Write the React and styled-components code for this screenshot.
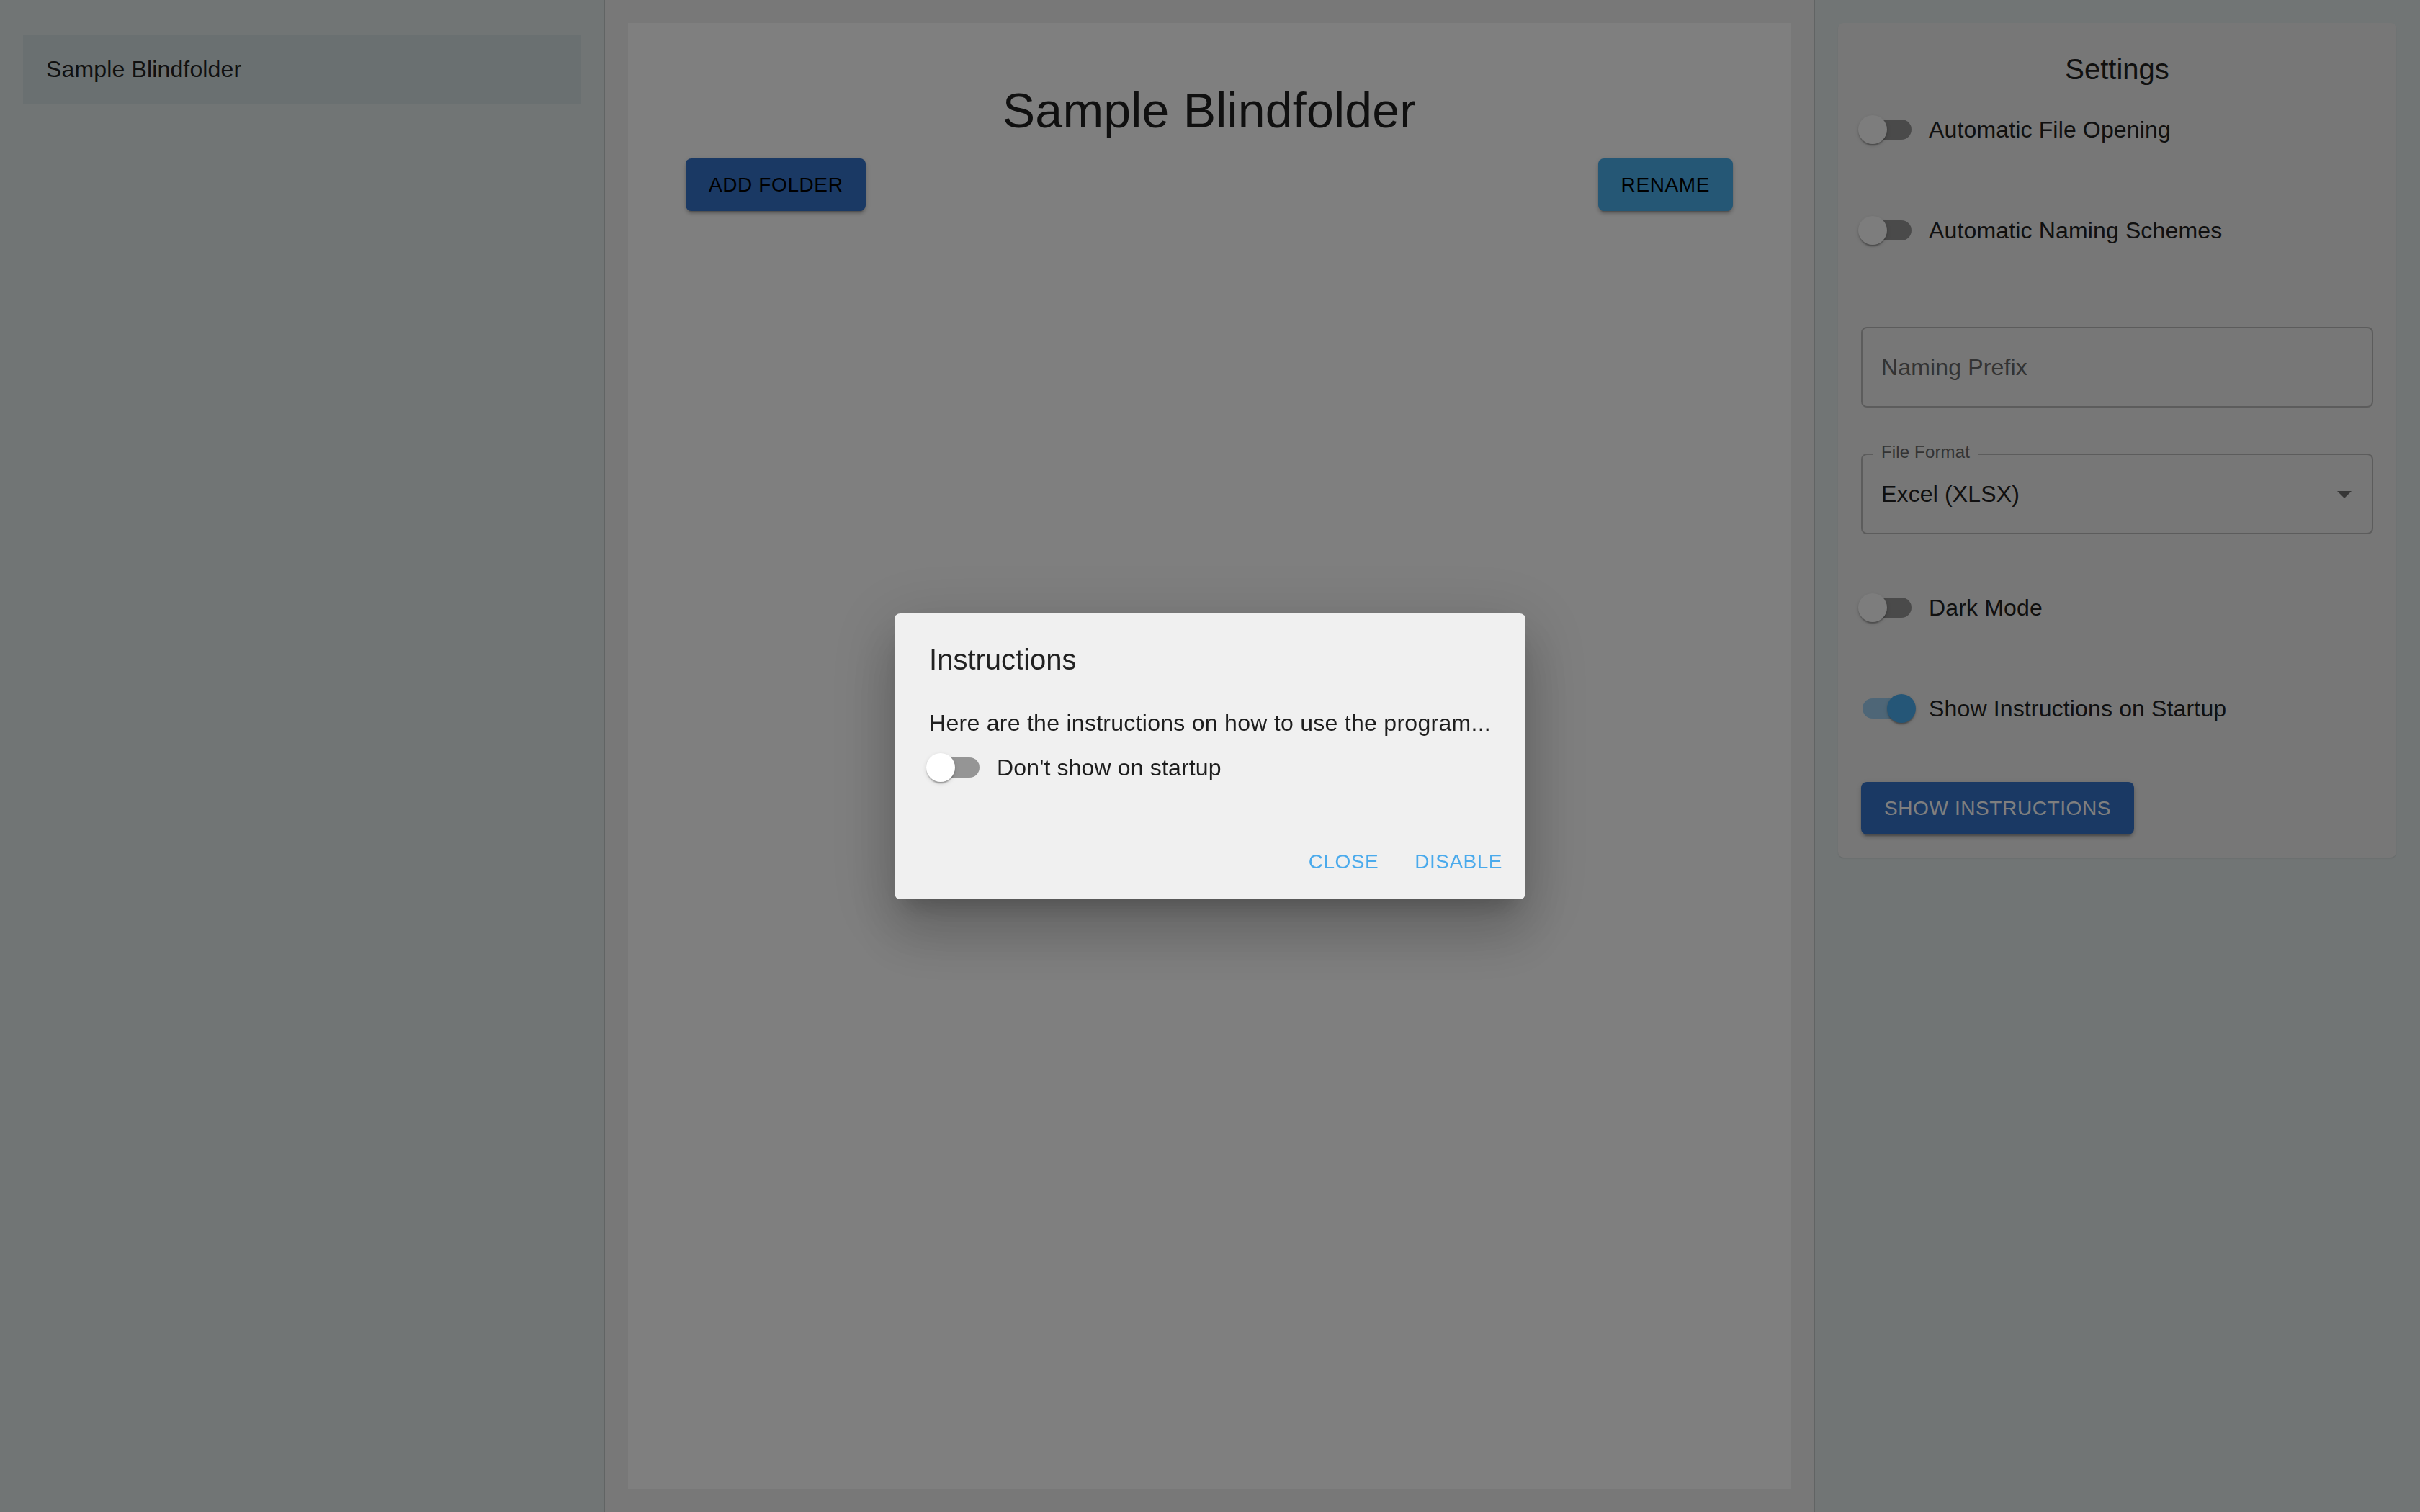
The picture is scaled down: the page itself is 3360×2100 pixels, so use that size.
import React from "react";
import styled, { createGlobalStyle } from "styled-components";

const GlobalStyle = createGlobalStyle`
  html, body {
    margin: 0;
    padding: 0;
    font-family: "Liberation Sans", Arial, sans-serif;
    color: #212121;
  }
  * {
    box-sizing: border-box;
  }
`;

const Layout = styled.div`
  display: grid;
  grid-template-columns: 840px 1fr 842px;
  height: 100vh;
  overflow: hidden;
`;

const Sidebar = styled.aside`
  background: #e2eaea;
  border-right: 2px solid #c2c9c9;
  padding: 48px 32px;
`;

const SidebarItem = styled.div`
  background: #d4e0e3;
  padding: 24px 32px;
  font-size: 32px;
  line-height: 48px;
  letter-spacing: 0.15px;
  color: #212121;
`;

const Main = styled.main`
  background: #f0f0f0;
  padding: 32px;
`;

const MainPaper = styled.section`
  background: #ffffff;
  height: 100%;
  padding: 80px;
`;

const Title = styled.h1`
  margin: 0 0 26px;
  font-size: 68px;
  line-height: 82px;
  font-weight: 400;
  text-align: center;
  letter-spacing: 0.2px;
  color: #212121;
`;

const ButtonRow = styled.div`
  display: flex;
  justify-content: space-between;
  align-items: center;
`;

const ContainedButton = styled.button`
  border: 0;
  border-radius: 8px;
  padding: 12px 32px;
  font-family: inherit;
  font-size: 28px;
  line-height: 49px;
  font-weight: 500;
  letter-spacing: 0.6px;
  text-transform: uppercase;
  background: ${(p) => p.$bg};
  color: ${(p) => p.$fg};
  box-shadow: 0 6px 2px -4px rgba(0, 0, 0, 0.2), 0 4px 4px 0 rgba(0, 0, 0, 0.14),
    0 2px 10px 0 rgba(0, 0, 0, 0.12);
  align-self: flex-start;
`;

const SettingsPanel = styled.aside`
  background: #e2eaea;
  border-left: 2px solid #c2c9c9;
  padding: 32px 33px 32px 32px;
`;

const SettingsPaper = styled.section`
  background: #efefef;
  border-radius: 8px;
  padding: 32px;
  display: flex;
  flex-direction: column;
  box-shadow: 0 2px 2px -1px rgba(0, 0, 0, 0.1), 0 1px 2px 0 rgba(0, 0, 0, 0.06);
`;

const SettingsTitle = styled.h2`
  margin: 0 0 14px;
  font-size: 40px;
  line-height: 64px;
  font-weight: 400;
  text-align: center;
  color: #212121;
`;

const SettingsStack = styled.div`
  display: flex;
  flex-direction: column;
  gap: 64px;
`;

const SwitchRow = styled.label`
  display: flex;
  align-items: center;
  height: 76px;
  margin-left: -22px;
  font-size: 32px;
  line-height: 48px;
  letter-spacing: 0.15px;
  color: #212121;
`;

const SwitchRoot = styled.span`
  position: relative;
  display: inline-block;
  width: 116px;
  height: 76px;
  flex-shrink: 0;
`;

const SwitchTrack = styled.span`
  position: absolute;
  left: 24px;
  top: 24px;
  width: 68px;
  height: 28px;
  border-radius: 14px;
  background: ${(p) => (p.$checked ? "#4aacee" : "#000")};
  opacity: ${(p) => (p.$checked ? 0.5 : 0.38)};
`;

const SwitchThumb = styled.span`
  position: absolute;
  top: 18px;
  left: ${(p) => (p.$checked ? "58px" : "18px")};
  width: 40px;
  height: 40px;
  border-radius: 50%;
  background: ${(p) => (p.$checked ? "#4aacee" : p.$white ? "#ffffff" : "#fafafa")};
  box-shadow: 0 4px 2px -2px rgba(0, 0, 0, 0.2), 0 2px 2px 0 rgba(0, 0, 0, 0.14),
    0 2px 6px 0 rgba(0, 0, 0, 0.12);
`;

const Switch = ({ checked, white }) => (
  <SwitchRoot>
    <SwitchTrack $checked={checked} />
    <SwitchThumb $checked={checked} $white={white} />
  </SwitchRoot>
);

const OutlinedField = styled.div`
  position: relative;
  display: flex;
  align-items: center;
  height: 112px;
  border: 2px solid #b8b8b8;
  border-radius: 8px;
  padding: 0 26px;
  font-size: 32px;
  line-height: 48px;
  letter-spacing: 0.15px;
  color: ${(p) => (p.$placeholder ? "#666666" : "#212121")};
  margin-top: ${(p) => p.$mt || "0px"};
`;

const FloatingLabel = styled.span`
  position: absolute;
  left: 15px;
  top: -16px;
  padding: 0 11px;
  background: #efefef;
  font-size: 24px;
  line-height: 24px;
  color: #666666;
`;

const SelectValue = styled.span`
  flex: 1;
`;

const DropArrow = styled.svg`
  width: 48px;
  height: 48px;
  margin-right: -12px;
  fill: rgba(0, 0, 0, 0.54);
`;

const Backdrop = styled.div`
  position: fixed;
  inset: 0;
  background: rgba(0, 0, 0, 0.5);
  display: flex;
  align-items: center;
  justify-content: center;
`;

const Dialog = styled.div`
  background: #f0f0f0;
  border-radius: 8px;
  box-shadow: 0 22px 30px -14px rgba(0, 0, 0, 0.2), 0 48px 76px 6px rgba(0, 0, 0, 0.14),
    0 18px 92px 16px rgba(0, 0, 0, 0.12);
`;

const DialogTitle = styled.h2`
  margin: 0;
  padding: 32px 48px;
  font-size: 40px;
  line-height: 64px;
  font-weight: 400;
  color: #212121;
`;

const DialogContent = styled.div`
  padding: 0 48px 40px;
`;

const DialogText = styled.p`
  margin: 0;
  font-size: 32px;
  line-height: 48px;
  letter-spacing: 0.28px;
  color: #1e1e1e;
`;

const DialogSwitchRow = styled(SwitchRow)`
  color: #1e1e1e;
`;

const DialogActions = styled.div`
  display: flex;
  justify-content: flex-end;
  gap: 18px;
  padding: 16px;
`;

const TextButton = styled.button`
  border: 0;
  background: transparent;
  padding: 12px 16px;
  border-radius: 8px;
  font-family: inherit;
  font-size: 28px;
  line-height: 49px;
  font-weight: 500;
  letter-spacing: 0.5px;
  text-transform: uppercase;
  color: #4aaaec;
`;

export default function App() {
  return (
    <>
      <GlobalStyle />
      <Layout>
        <Sidebar>
          <SidebarItem>Sample Blindfolder</SidebarItem>
        </Sidebar>

        <Main>
          <MainPaper>
            <Title>Sample Blindfolder</Title>
            <ButtonRow>
              <ContainedButton $bg="#3472c8" $fg="#000000">
                Add Folder
              </ContainedButton>
              <ContainedButton $bg="#4aaeea" $fg="#000000">
                Rename
              </ContainedButton>
            </ButtonRow>
          </MainPaper>
        </Main>

        <SettingsPanel>
          <SettingsPaper>
            <SettingsTitle>Settings</SettingsTitle>
            <SettingsStack>
              <SwitchRow>
                <Switch />
                Automatic File Opening
              </SwitchRow>
              <SwitchRow>
                <Switch />
                Automatic Naming Schemes
              </SwitchRow>
              <OutlinedField $placeholder $mt="32px">
                Naming Prefix
              </OutlinedField>
              <OutlinedField>
                <FloatingLabel>File Format</FloatingLabel>
                <SelectValue>Excel (XLSX)</SelectValue>
                <DropArrow viewBox="0 0 24 24">
                  <path d="M7 10l5 5 5-5z" />
                </DropArrow>
              </OutlinedField>
              <SwitchRow>
                <Switch />
                Dark Mode
              </SwitchRow>
              <SwitchRow>
                <Switch checked />
                Show Instructions on Startup
              </SwitchRow>
              <ContainedButton $bg="#3472c8" $fg="#ffffff">
                Show Instructions
              </ContainedButton>
            </SettingsStack>
          </SettingsPaper>
        </SettingsPanel>
      </Layout>

      <Backdrop>
        <Dialog>
          <DialogTitle>Instructions</DialogTitle>
          <DialogContent>
            <DialogText>Here are the instructions on how to use the program...</DialogText>
            <DialogSwitchRow>
              <Switch white />
              Don't show on startup
            </DialogSwitchRow>
          </DialogContent>
          <DialogActions>
            <TextButton>Close</TextButton>
            <TextButton>Disable</TextButton>
          </DialogActions>
        </Dialog>
      </Backdrop>
    </>
  );
}
